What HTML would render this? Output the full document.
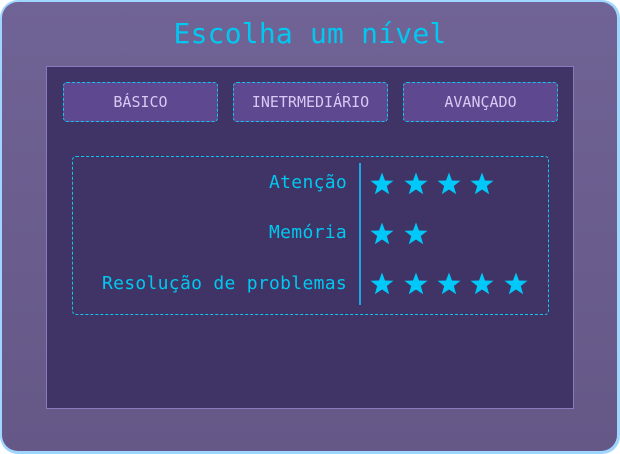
<!DOCTYPE html>
<html><head><meta charset="utf-8"><style>
*{margin:0;padding:0;box-sizing:border-box}
html,body{width:620px;height:454px;background:#fff;overflow:hidden}
.frame{position:absolute;left:0;top:0;width:620px;height:454px;border-radius:18px;background:#9fd5ff}
.inner{position:absolute;left:2px;top:2px;width:615px;height:449px;border-radius:16px;background:linear-gradient(#706395,#655887)}
.title{position:absolute;left:0;top:17px;width:620px;text-align:center;font:28px "DejaVu Sans Mono",monospace;letter-spacing:0.2px;color:#00c8f0}
.panel{position:absolute;left:46px;top:66px;width:528px;height:343px;background:#403466;border:1px solid #8a7bbd}
.btn{position:absolute;top:15px;width:155px;height:40px;background:#5e4890;border:1px dashed #14c4f0;border-radius:4px;color:#d9c8f4;font:15px "DejaVu Sans Mono",monospace;text-align:center;line-height:38px}
.box{position:absolute;left:25px;top:89px;width:477px;height:159px;border:1px dashed #14c4f0;border-radius:4px}
.div{position:absolute;left:286px;top:6px;width:2px;height:142px;background:#1aa8e0}
.lbl{position:absolute;right:201px;font:18px "DejaVu Sans Mono",monospace;letter-spacing:0.3px;color:#00c8f0;white-space:nowrap}
.stars{position:absolute;left:297px}
.stars svg{position:absolute;top:0}
</style></head><body>
<div class="frame"></div><div class="inner"></div>
<div class="title">Escolha um nível</div>
<div class="panel">
<div class="btn" style="left:16px">BÁSICO</div>
<div class="btn" style="left:186px">INETRMEDIÁRIO</div>
<div class="btn" style="left:356px">AVANÇADO</div>
<div class="box">
<div class="div"></div>
<div class="lbl" style="top:15px">Atenção</div>
<div class="lbl" style="top:65px">Memória</div>
<div class="lbl" style="top:116px">Resolução de problemas</div>
<div class="stars" style="top:15px">
<svg style="left:0" width="24" height="23" viewBox="0 0 24 23"><path d="M12 0.5 15 8.5 23.5 8.8 16.8 14 19.2 22.3 12 17.5 4.8 22.3 7.2 14 0.5 8.8 9 8.5Z" fill="#00c8f8"/></svg>
<svg style="left:34px" width="24" height="23" viewBox="0 0 24 23"><path d="M12 0.5 15 8.5 23.5 8.8 16.8 14 19.2 22.3 12 17.5 4.8 22.3 7.2 14 0.5 8.8 9 8.5Z" fill="#00c8f8"/></svg>
<svg style="left:67px" width="24" height="23" viewBox="0 0 24 23"><path d="M12 0.5 15 8.5 23.5 8.8 16.8 14 19.2 22.3 12 17.5 4.8 22.3 7.2 14 0.5 8.8 9 8.5Z" fill="#00c8f8"/></svg>
<svg style="left:100px" width="24" height="23" viewBox="0 0 24 23"><path d="M12 0.5 15 8.5 23.5 8.8 16.8 14 19.2 22.3 12 17.5 4.8 22.3 7.2 14 0.5 8.8 9 8.5Z" fill="#00c8f8"/></svg>
</div>
<div class="stars" style="top:65px">
<svg style="left:0" width="24" height="23" viewBox="0 0 24 23"><path d="M12 0.5 15 8.5 23.5 8.8 16.8 14 19.2 22.3 12 17.5 4.8 22.3 7.2 14 0.5 8.8 9 8.5Z" fill="#00c8f8"/></svg>
<svg style="left:34px" width="24" height="23" viewBox="0 0 24 23"><path d="M12 0.5 15 8.5 23.5 8.8 16.8 14 19.2 22.3 12 17.5 4.8 22.3 7.2 14 0.5 8.8 9 8.5Z" fill="#00c8f8"/></svg>
</div>
<div class="stars" style="top:115px">
<svg style="left:0" width="24" height="23" viewBox="0 0 24 23"><path d="M12 0.5 15 8.5 23.5 8.8 16.8 14 19.2 22.3 12 17.5 4.8 22.3 7.2 14 0.5 8.8 9 8.5Z" fill="#00c8f8"/></svg>
<svg style="left:34px" width="24" height="23" viewBox="0 0 24 23"><path d="M12 0.5 15 8.5 23.5 8.8 16.8 14 19.2 22.3 12 17.5 4.8 22.3 7.2 14 0.5 8.8 9 8.5Z" fill="#00c8f8"/></svg>
<svg style="left:67px" width="24" height="23" viewBox="0 0 24 23"><path d="M12 0.5 15 8.5 23.5 8.8 16.8 14 19.2 22.3 12 17.5 4.8 22.3 7.2 14 0.5 8.8 9 8.5Z" fill="#00c8f8"/></svg>
<svg style="left:100px" width="24" height="23" viewBox="0 0 24 23"><path d="M12 0.5 15 8.5 23.5 8.8 16.8 14 19.2 22.3 12 17.5 4.8 22.3 7.2 14 0.5 8.8 9 8.5Z" fill="#00c8f8"/></svg>
<svg style="left:134px" width="24" height="23" viewBox="0 0 24 23"><path d="M12 0.5 15 8.5 23.5 8.8 16.8 14 19.2 22.3 12 17.5 4.8 22.3 7.2 14 0.5 8.8 9 8.5Z" fill="#00c8f8"/></svg>
</div>
</div>
</div>
</body></html>
